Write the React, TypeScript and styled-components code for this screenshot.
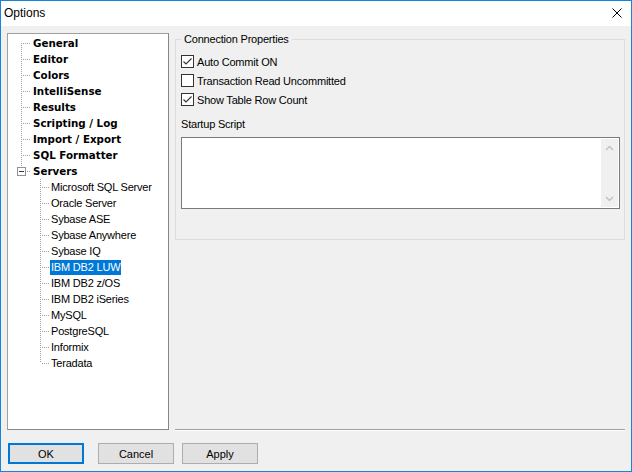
import React from 'react';
import styled, { createGlobalStyle } from 'styled-components';

const GlobalStyle = createGlobalStyle`
  html, body {
    margin: 0;
    padding: 0;
    background: #fff;
  }
  body {
    font-family: "Liberation Sans", Arial, sans-serif;
    font-size: 11px;
    color: #000;
  }
  * {
    box-sizing: border-box;
  }
`;

const Window = styled.div`
  width: 632px;
  height: 472px;
  border: 1px solid #1883d7;
  background: #f0f0f0;
  display: flex;
  flex-direction: column;
`;

const TitleBar = styled.div`
  height: 25px;
  flex: none;
  background: #fff;
  display: flex;
  align-items: center;
  justify-content: space-between;
  padding: 0 9px 1px 3px;
  font-size: 12px;
`;

const Main = styled.div`
  display: flex;
  gap: 6px;
  height: 405px;
  padding: 7px 6px 0 6px;
`;

const Tree = styled.div`
  width: 162px;
  height: 397px;
  flex: none;
  background: #fff;
  border: 1px solid;
  border-color: #a0a0a0 #828790 #828790 #a0a0a0;
  padding: 1px 0 0 4px;
`;

const TreeRow = styled.div`
  display: flex;
  height: 16px;
`;

const Indent = styled.span`
  width: 19px;
  flex: none;
`;

const GuideSvg = styled.svg`
  flex: none;
  display: block;
`;

const NodeLabel = styled.span<{ $bold?: boolean; $selected?: boolean }>`
  margin-top: 1px;
  height: 15px;
  line-height: 15px;
  padding: ${(p) => (p.$bold ? '0 2px' : '0 1px')};
  white-space: nowrap;
  font-family: ${(p) => (p.$bold ? '"DejaVu Sans", Verdana, sans-serif' : '"Liberation Sans", Arial, sans-serif')};
  font-size: ${(p) => (p.$bold ? '10.3px' : '11px')};
  font-weight: ${(p) => (p.$bold ? 700 : 400)};
  letter-spacing: ${(p) => (p.$bold ? '0' : '-0.2px')};
  background: ${(p) => (p.$selected ? '#0078d7' : 'transparent')};
  color: ${(p) => (p.$selected ? '#fff' : '#000')};
`;

const RightPane = styled.div`
  flex: 1;
  display: flex;
  flex-direction: column;
  min-width: 0;
`;

const Group = styled.fieldset`
  margin: 0;
  min-width: 0;
  padding: 9px 4px 30px 5px;
  border: 1px solid #dcdcdc;
  display: flex;
  flex-direction: column;
`;

const Legend = styled.legend`
  padding: 0 3px;
  line-height: 13px;
  letter-spacing: -0.2px;
`;

const CheckList = styled.div`
  display: flex;
  flex-direction: column;
  gap: 6px;
`;

const CheckRow = styled.label`
  display: flex;
  align-items: center;
  gap: 3px;
  height: 13px;
  letter-spacing: -0.2px;
`;

const Box = styled.span`
  width: 13px;
  height: 13px;
  flex: none;
  border: 1px solid #333;
  background: #fff;
  display: flex;
  align-items: center;
  justify-content: center;
`;

const FieldLabel = styled.div`
  margin-top: 12px;
  line-height: 13px;
  letter-spacing: -0.2px;
`;

const ScriptBox = styled.div`
  margin-top: 6px;
  height: 72px;
  border: 1px solid #7a7a7a;
  background: #fff;
  display: flex;
  justify-content: flex-end;
  padding: 1px;
`;

const ScrollBar = styled.div`
  width: 17px;
  background: #f0f0f0;
  display: flex;
  flex-direction: column;
  justify-content: space-between;
`;

const ScrollArrow = styled.div`
  height: 17px;
  display: flex;
  align-items: center;
  justify-content: center;
`;

const Separator = styled.div`
  margin-top: auto;
  height: 2px;
  border-top: 1px solid #a0a0a0;
  border-bottom: 1px solid #fff;
`;

const ButtonRow = styled.div`
  display: flex;
  gap: 8px;
  padding: 12px 0 0 7px;
`;

const Button = styled.button<{ $default?: boolean }>`
  width: 76px;
  height: 21px;
  margin: 0 ${(p) => (p.$default ? '6px' : '0')} 0 0;
  padding: 0;
  background: #e1e1e1;
  border: ${(p) => (p.$default ? '2px solid #0078d7' : '1px solid #adadad')};
  font-family: "Liberation Sans", Arial, sans-serif;
  font-size: 11px;
  color: #000;
`;

const DOT = '#a0a0a0';

function Guide({ top, bottom, box }: { top?: boolean; bottom?: boolean; box?: boolean }) {
  return (
    <GuideSvg width="19" height="16" viewBox="0 0 19 16" shapeRendering="crispEdges">
      {(top || bottom) && (
        <line x1="9.5" x2="9.5" y1={top ? 0 : 8} y2={bottom ? 16 : 8} stroke={DOT} strokeDasharray="1 1" />
      )}
      <line x1="11" x2="19" y1="8.5" y2="8.5" stroke={DOT} strokeDasharray="1 1" />
      {box && (
        <>
          <rect x="5.5" y="4.5" width="8" height="8" fill="#fff" stroke="#919191" />
          <line x1="7" x2="12" y1="8.5" y2="8.5" stroke="#1e3f6e" />
        </>
      )}
    </GuideSvg>
  );
}

const topLevel = [
  'General',
  'Editor',
  'Colors',
  'IntelliSense',
  'Results',
  'Scripting / Log',
  'Import / Export',
  'SQL Formatter',
];

const servers = [
  'Microsoft SQL Server',
  'Oracle Server',
  'Sybase ASE',
  'Sybase Anywhere',
  'Sybase IQ',
  'IBM DB2 LUW',
  'IBM DB2 z/OS',
  'IBM DB2 iSeries',
  'MySQL',
  'PostgreSQL',
  'Informix',
  'Teradata',
];

const checks = [
  { label: 'Auto Commit ON', checked: true },
  { label: 'Transaction Read Uncommitted', checked: false },
  { label: 'Show Table Row Count', checked: true },
];

function CheckBox({ checked }: { checked: boolean }) {
  return (
    <Box>
      {checked && (
        <svg width="11" height="11" viewBox="0 0 11 11">
          <path d="M1.5 5.5 L4 8 L9.5 2.5" fill="none" stroke="#333" strokeWidth="1.1" />
        </svg>
      )}
    </Box>
  );
}

export default function App() {
  const selected = 'IBM DB2 LUW';

  return (
    <>
      <GlobalStyle />
      <Window>
        <TitleBar>
          <span>Options</span>
          <svg width="10" height="10" viewBox="0 0 10 10">
            <path d="M0.5 0.5 L9.5 9.5 M9.5 0.5 L0.5 9.5" stroke="#000" strokeWidth="1" />
          </svg>
        </TitleBar>
        <Main>
          <Tree>
            {topLevel.map((name, i) => (
              <TreeRow key={name}>
                <Guide top={i > 0} bottom />
                <NodeLabel $bold>{name}</NodeLabel>
              </TreeRow>
            ))}
            <TreeRow>
              <Guide top box />
              <NodeLabel $bold>Servers</NodeLabel>
            </TreeRow>
            {servers.map((name, i) => (
              <TreeRow key={name}>
                <Indent />
                <Guide top bottom={i < servers.length - 1} />
                <NodeLabel $selected={name === selected}>{name}</NodeLabel>
              </TreeRow>
            ))}
          </Tree>
          <RightPane>
            <Group>
              <Legend>Connection Properties</Legend>
              <CheckList>
                {checks.map((c) => (
                  <CheckRow key={c.label}>
                    <CheckBox checked={c.checked} />
                    {c.label}
                  </CheckRow>
                ))}
              </CheckList>
              <FieldLabel>Startup Script</FieldLabel>
              <ScriptBox>
                <ScrollBar>
                  <ScrollArrow>
                    <svg width="9" height="6" viewBox="0 0 9 6">
                      <path d="M1 5 L4.5 1.5 L8 5" fill="none" stroke="#c0c0c0" strokeWidth="1.4" />
                    </svg>
                  </ScrollArrow>
                  <ScrollArrow>
                    <svg width="9" height="6" viewBox="0 0 9 6">
                      <path d="M1 1 L4.5 4.5 L8 1" fill="none" stroke="#c0c0c0" strokeWidth="1.4" />
                    </svg>
                  </ScrollArrow>
                </ScrollBar>
              </ScriptBox>
            </Group>
            <Separator />
          </RightPane>
        </Main>
        <ButtonRow>
          <Button $default>OK</Button>
          <Button>Cancel</Button>
          <Button>Apply</Button>
        </ButtonRow>
      </Window>
    </>
  );
}
